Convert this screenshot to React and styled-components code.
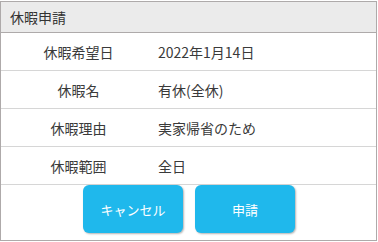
import React from 'react';
import styled, { createGlobalStyle } from 'styled-components';

const GlobalStyle = createGlobalStyle`
    body {
        margin:0;
        background:#ffffff;
        font-family:"Noto Sans CJK JP", "Noto Sans", sans-serif;
    }
`;

const Panel = styled.div`
    box-sizing:border-box;
    width:377px;
    height:240px;
    margin-top:1px;
    border:1px solid #aeaaaa;
    display:flex;
    flex-direction:column;
    background:#ffffff;
`;
const Header = styled.div`
    height:30px;
    border-bottom:1px solid #aeaaaa;
    background:#ebebeb;
    color:#333333;
    font-size:14px;
    display:flex;
    align-items:center;
    padding-left:9px;
`;
const Row = styled.div`
    box-sizing:border-box;
    height:38px;
    border-bottom:1px solid #d6d6d6;
    display:grid;
    grid-template-columns:155px 1fr;
    align-items:center;
    font-size:14px;
    color:#3a3a3a;
`;
const Label = styled.div`
    text-align:center;
`;
const Value = styled.div`
    padding-left:2px;
`;
const ButtonBar = styled.div`
    display:flex;
    justify-content:center;
    gap:12px;
    padding-left:1px;
`;
const Button = styled.button`
    width:100px;
    height:48px;
    border:none;
    border-radius:6px;
    background:#1fb8ec;
    color:#ffffff;
    font-family:"Noto Sans CJK JP", "Noto Sans", sans-serif;
    font-size:13px;
    box-shadow:1px 1px 2px rgba(0,0,0,0.3);
    cursor:pointer;
`;

const items = [
    { label:'休暇希望日', value:'2022年1月14日' },
    { label:'休暇名', value:'有休(全休)' },
    { label:'休暇理由', value:'実家帰省のため' },
    { label:'休暇範囲', value:'全日' },
];

const App = () => {
    return (
        <>
            <GlobalStyle />
            <Panel>
                <Header>休暇申請</Header>
                {
                    items.map((item,index) => {
                        return (
                            <Row key={index}>
                                <Label>{item.label}</Label>
                                <Value>{item.value}</Value>
                            </Row>
                        )
                    })
                }
                <ButtonBar>
                    <Button>キャンセル</Button>
                    <Button>申請</Button>
                </ButtonBar>
            </Panel>
        </>
    )
}

export default App;
